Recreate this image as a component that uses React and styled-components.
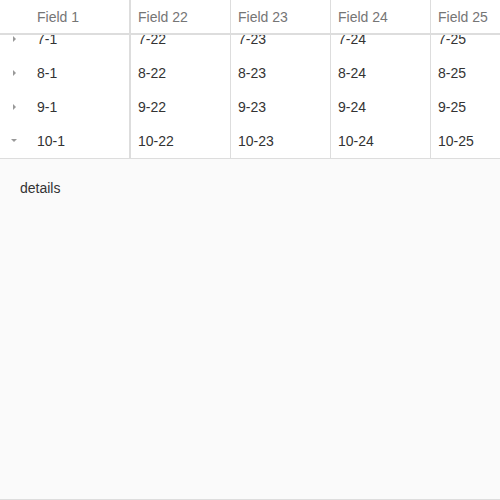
import React, { useLayoutEffect, useRef } from "react";
import styled, { createGlobalStyle } from "styled-components";

const Global = createGlobalStyle`
  html, body { margin: 0; padding: 0; background: #fff; }
  body { font-family: "Liberation Sans", Arial, sans-serif; font-size: 14px; color: #333; }
`;

const Page = styled.div`
  display: flex;
  flex-direction: column;
  width: 500px;
  height: 500px;
  overflow: hidden;
`;

const Grid = styled.div`
  display: flex;
  flex-direction: column;
  border-bottom: 1px solid #ddd;
`;

const Header = styled.div`
  display: flex;
  height: 33px;
  border-bottom: 2px solid #ddd;
  color: #757575;
`;

const Body = styled.div`
  height: 123px;
  overflow: hidden;
`;

const Row = styled.div`
  display: flex;
  height: 34px;
`;

const Cell = styled.div`
  flex: 0 0 auto;
  box-sizing: border-box;
  display: flex;
  align-items: center;
  width: ${(p) => p.$w}px;
  padding-left: ${(p) => p.$pad}px;
  border-right: ${(p) => p.$bw}px solid #ddd;
  white-space: nowrap;
  overflow: hidden;
`;

const Toggle = styled.span`
  flex: 0 0 auto;
  width: 29px;
  height: 100%;
  display: flex;
  align-items: center;
  justify-content: center;
`;

const Caret = styled.span`
  width: 0;
  height: 0;
  ${(p) =>
    p.$open
      ? `border-left: 3px solid transparent; border-right: 3px solid transparent; border-top: 3px solid #999; margin-left: -2px; margin-top: -1px;`
      : `border-top: 3px solid transparent; border-bottom: 3px solid transparent; border-left: 3px solid #999; margin-left: -1px;`}
`;

const Label = styled.span`
  padding-left: 8px;
`;

const Details = styled.div`
  flex: 1;
  background: #fafafa;
  border-bottom: 1px solid #ddd;
  padding: 21px 20px;
  line-height: 16px;
`;

const cols = [22, 23, 24, 25];
const rows = Array.from({ length: 10 }, (_, i) => i + 1);

function FirstCell({ children, toggle }) {
  return (
    <Cell $w={131} $pad={0} $bw={2}>
      {toggle}
      <Label>{children}</Label>
    </Cell>
  );
}

export default function App() {
  const bodyRef = useRef(null);
  useLayoutEffect(() => {
    if (bodyRef.current) bodyRef.current.scrollTop = bodyRef.current.scrollHeight;
  }, []);
  return (
    <Page>
      <Global />
      <Grid>
        <Header>
          <FirstCell toggle={<Toggle />}>Field 1</FirstCell>
          {cols.map((c) => (
            <Cell key={c} $w={100} $pad={7} $bw={1}>
              Field {c}
            </Cell>
          ))}
        </Header>
        <Body ref={bodyRef}>
          {rows.map((r) => (
            <Row key={r}>
              <FirstCell
                toggle={
                  <Toggle>
                    <Caret $open={r === 10} />
                  </Toggle>
                }
              >
                {r}-1
              </FirstCell>
              {cols.map((c) => (
                <Cell key={c} $w={100} $pad={7} $bw={1}>
                  {r}-{c}
                </Cell>
              ))}
            </Row>
          ))}
        </Body>
      </Grid>
      <Details>details</Details>
    </Page>
  );
}
